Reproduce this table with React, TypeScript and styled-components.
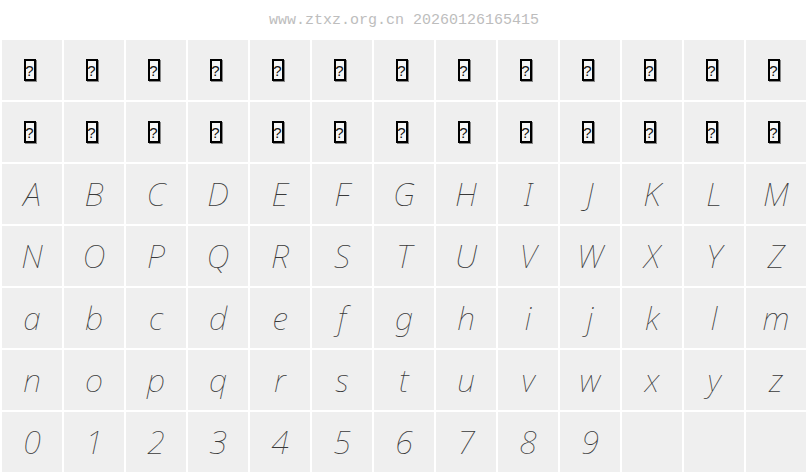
import styled, { createGlobalStyle } from "styled-components";

const GlobalStyle = createGlobalStyle`
  html, body {
    margin: 0;
    padding: 0;
    background: #ffffff;
  }
`;

const upper = "ABCDEFGHIJKLMNOPQRSTUVWXYZ".split("");
const lower = "abcdefghijklmnopqrstuvwxyz".split("");
const digits = "0123456789".split("");

const App = () => {
  return (
    <Page>
      <GlobalStyle />
      <Header>www.ztxz.org.cn 20260126165415</Header>
      <Grid>
        {Array.from({ length: 26 }).map((_, i) => (
          <Cell key={"t" + i}>
            <Tofu>?</Tofu>
          </Cell>
        ))}
        {[...upper, ...lower, ...digits].map((ch, i) => (
          <Cell key={"g" + i}>
            <Glyph>{ch}</Glyph>
          </Cell>
        ))}
        {Array.from({ length: 3 }).map((_, i) => (
          <Cell key={"e" + i} />
        ))}
      </Grid>
    </Page>
  );
};

const Page = styled.div`
  width: 808px;
  height: 476px;
  overflow: hidden;
`;

const Header = styled.div`
  height: 40px;
  display: flex;
  align-items: center;
  justify-content: center;
  padding-top: 1px;
  box-sizing: border-box;
  font-family: "Liberation Mono", monospace;
  font-size: 15px;
  color: #bdbdbd;
`;

const Grid = styled.div`
  display: grid;
  grid-template-columns: repeat(13, 60px);
  grid-auto-rows: 60px;
  gap: 2px;
  padding-left: 2px;
`;

const Cell = styled.div`
  background: #efefef;
  display: flex;
  align-items: center;
  justify-content: center;
`;

const Tofu = styled.span`
  display: flex;
  align-items: center;
  justify-content: center;
  width: 8px;
  height: 18px;
  margin-left: -5px;
  border: 2px solid #000;
  border-right-width: 2px;
  box-shadow: 1px 1px 0 #888;
  background: #f6f6f6;
  font-family: "Liberation Sans", sans-serif;
  font-size: 15px;
  line-height: 1;
  color: #111;
`;

const Glyph = styled.span`
  font-family: "Noto Sans", "Open Sans", sans-serif;
  font-style: italic;
  font-weight: 100;
  font-size: 32px;
  line-height: 1;
  color: #3a3a3a;
`;

export default App;
